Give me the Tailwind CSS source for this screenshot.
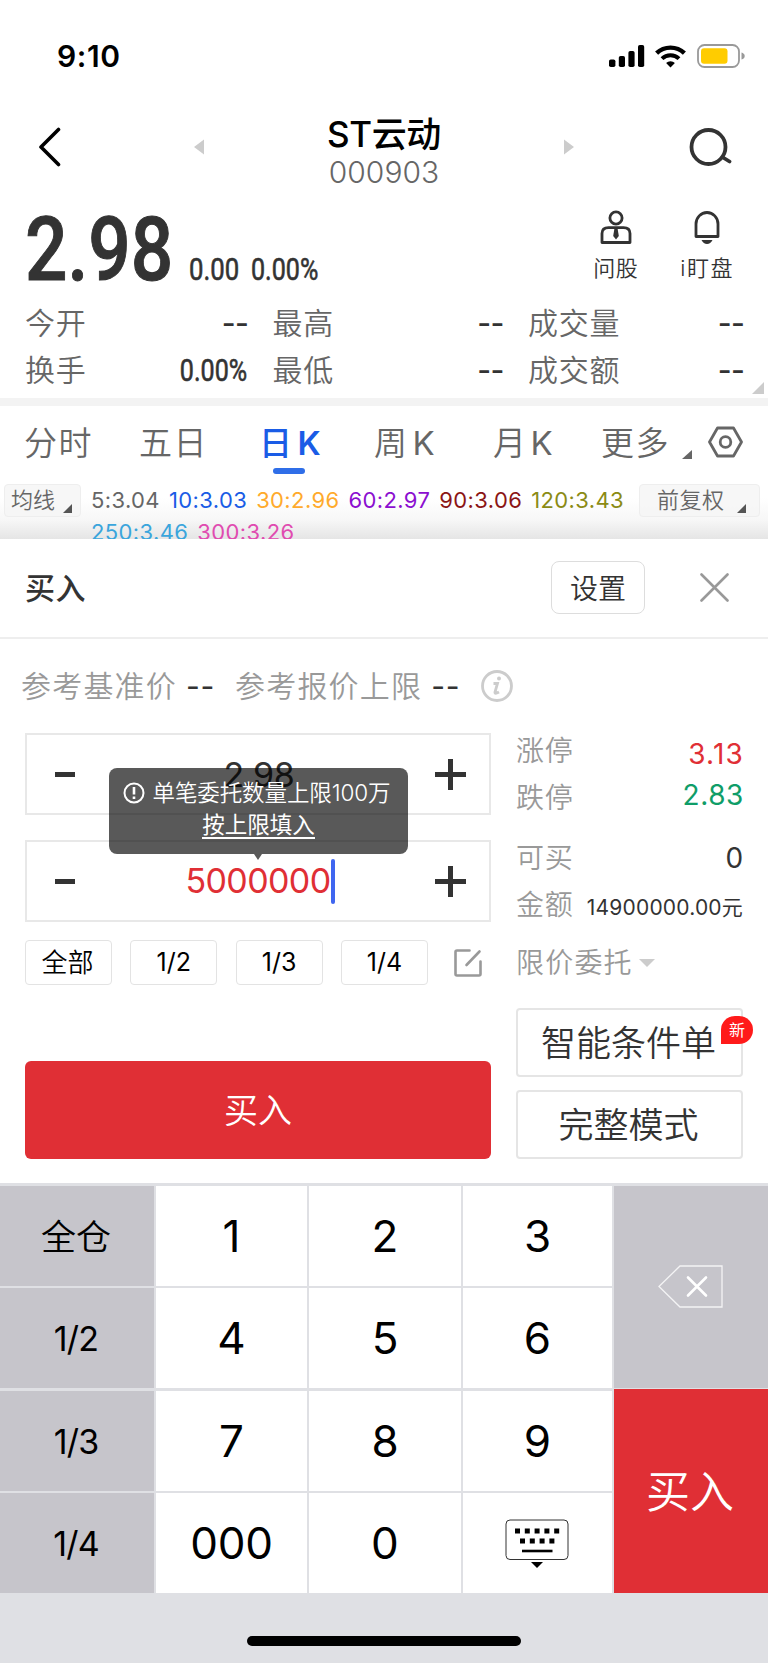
<!DOCTYPE html>
<html lang="zh-CN">

<head>
    <meta charset="UTF-8">
    <meta name="viewport" content="width=device-width, initial-scale=1.0">
    <script src="https://cdn.jsdelivr.net/npm/@tailwindcss/browser@4"></script>
    <title>ST云动 000903</title>
</head>

<body class="w-[768px] h-[1663px] overflow-hidden bg-white text-[#333] font-['Inter','Noto_Sans_CJK_SC',sans-serif] whitespace-nowrap leading-none">

    <!--Status bar-->
    <section class="flex justify-between items-center h-28 pl-[57px] pr-[23px] text-black">
        <p class="text-[30px] font-[560] tracking-[0.6px]">9:10</p>
        <div class="flex items-center">
            <svg class="w-9 h-[22px]" viewBox="0 0 36 22">
                <rect x="0" y="14.5" width="6.4" height="7.5" rx="1.8" />
                <rect x="9.8" y="11" width="6.2" height="11" rx="1.8" />
                <rect x="19.4" y="6" width="6.2" height="16" rx="1.8" />
                <rect x="29" y="0" width="6.2" height="22" rx="1.8" />
            </svg>
            <svg class="ml-[10px] w-[31px] h-[23px]" viewBox="0 0 31 23" fill="none" stroke="#000">
                <path d="M1.6 8.2a20 20 0 0 1 27.8 0" stroke-width="4.4" />
                <path d="M7 13.6a12.3 12.3 0 0 1 17 0" stroke-width="4" />
                <path d="M15.5 22.6l-4.4-4.5a6.3 6.3 0 0 1 8.8 0z" fill="#000" stroke="none" />
            </svg>
            <svg class="ml-[11px] w-12 h-6" viewBox="0 0 48 24">
                <rect x="1" y="1" width="41" height="22" rx="6.5" fill="none" stroke="#999" stroke-width="1.8" />
                <rect x="4" y="4.3" width="26.5" height="15.4" rx="3" fill="#fc0" />
                <path d="M44.5 8.5q3.2 1 3.2 3.5t-3.2 3.5z" fill="#999" />
            </svg>
        </div>
    </section>

    <!--Stock name-->
    <section class="flex items-center h-[70px] pl-[38px] pr-9">
        <svg class="w-[23px] h-10" viewBox="0 0 23 40" fill="none" stroke="#000" stroke-width="3.6" stroke-linecap="round" stroke-linejoin="round">
            <path d="M20.5 2.5L3 20l17.5 17.5" />
        </svg>
        <svg class="w-[10px] h-4 ml-[133px]" viewBox="0 0 10 16" fill="#ccc"><path d="M10 .5v15L0 8z" /></svg>
        <div class="flex flex-col items-center w-[360px] pt-3">
            <h1 class="text-[35px] leading-[38px] font-medium text-black tracking-[-0.4px]">ST云动</h1>
            <p class="text-[30px] leading-[38px] font-[350] text-[#666]">000903</p>
        </div>
        <svg class="w-[10px] h-4" viewBox="0 0 10 16" fill="#ccc"><path d="M0 .5v15L10 8z" /></svg>
        <svg class="ml-auto w-[43px] h-10" viewBox="0 0 43 40" fill="none" stroke="#333" stroke-width="3.8" stroke-linecap="round">
            <circle cx="19.5" cy="20" r="17" />
            <path d="M34 30.5l6.5 4" />
        </svg>
    </section>

    <!--Price-->
    <section class="flex justify-between h-[116px] pl-[25px] pr-[34px]">
        <div class="flex font-['Roboto',sans-serif]">
            <p class="w-[164px] pt-[23px] text-[89px] leading-[90px] font-medium [-webkit-text-stroke:1px] origin-left scale-x-[0.84]">2.98</p>
            <p class="w-[62px] pt-[72px] text-[31px] leading-[32px] [-webkit-text-stroke:0.6px] origin-left scale-x-[0.83]">0.00</p>
            <p class="pt-[72px] text-[31px] leading-[32px] [-webkit-text-stroke:0.6px] origin-left scale-x-[0.81]">0.00%</p>
        </div>
        <div class="flex gap-[42px] text-[22px] leading-7 pt-7 font-[350]">
            <div class="flex flex-col items-center">
                <svg class="w-8 h-[35px]" viewBox="0 0 32 35" fill="none" stroke="#333" stroke-width="2.8">
                    <circle cx="16" cy="8" r="6.1" />
                    <path d="M8.5 17.6h15q6.5 0 6.5 6v8.9h-28v-8.9q0-6 6.5-6z" stroke-linejoin="round" />
                    <path d="M14.5 18h3l1.3 8-2.8 3.5L13.2 26z" fill="#333" stroke="none" />
                </svg>
                <span class="mt-[9px] tracking-[0.5px]">问股</span>
            </div>
            <div class="flex flex-col items-center">
                <svg class="w-7 h-[35px]" viewBox="0 0 28 35" fill="none" stroke="#333" stroke-width="2.8">
                    <path d="M3 26.5V14a11 11.5 0 0 1 22 0v12.5z" stroke-linejoin="round" />
                    <path d="M8.5 30h11q-2 4-5.5 4t-5.5-4z" fill="#333" stroke="none" />
                </svg>
                <span class="mt-[9px] tracking-[1.5px]">i盯盘</span>
            </div>
        </div>
    </section>

    <!--Quote figures-->
    <section class="relative grid grid-cols-[222px_230px_214px] gap-x-[25.5px] content-start h-[100px] pl-[25px] pt-[2px] text-[30px] leading-[47px] text-[#666] font-[350] tracking-[0.7px]">
        <p class="flex justify-between">今开<b class="font-medium text-[#333] tracking-[-0.8px] -mr-[1px]">--</b></p>
        <p class="flex justify-between">最高<b class="font-medium text-[#333] tracking-[-0.8px] -mr-[1px]">--</b></p>
        <p class="flex justify-between">成交量<b class="font-medium text-[#333] tracking-[-0.8px] -mr-[2px]">--</b></p>
        <p class="flex justify-between">换手<b class="font-['Roboto'] font-normal text-[31px] text-[#333] tracking-normal [-webkit-text-stroke:0.6px] origin-right scale-x-[0.81]">0.00%</b></p>
        <p class="flex justify-between">最低<b class="font-medium text-[#333] tracking-[-0.8px] -mr-[1px]">--</b></p>
        <p class="flex justify-between">成交额<b class="font-medium text-[#333] tracking-[-0.8px] -mr-[2px]">--</b></p>
        <svg class="absolute right-1 bottom-1 w-3 h-3" viewBox="0 0 12 12" fill="#ccc"><path d="M12 0v12H0z" /></svg>
    </section>
    <div class="h-2 bg-[#f3f3f3]"></div>

    <!--Chart tabs-->
    <section class="grid grid-cols-[115px_122px_113px_119px_108px_107px_35px] h-[78px] pl-[24px] text-[33px] leading-[74px] text-[#666] font-[350] tracking-[1.5px]">
        <span>分时</span>
        <span>五日</span>
        <span class="relative -ml-[2px] font-medium text-[#1a5ce6]">日<i class="not-italic ml-[4px] font-semibold">K</i>
            <i class="absolute left-[14px] top-[62px] w-8 h-[6px] rounded-full bg-[#2f6ee8]"></i></span>
        <span>周<i class="not-italic ml-[4px] font-normal">K</i></span>
        <span>月<i class="not-italic ml-[3px] font-normal">K</i></span>
        <span class="flex items-start">更多<svg class="ml-3 mt-[44px] w-[10px] h-[9px]" viewBox="0 0 10 9" fill="#666"><path d="M10 0v9H0z" /></svg></span>
        <svg class="mt-5 w-[35px] h-8" viewBox="0 0 35 32" fill="none" stroke="#666" stroke-width="2.8">
            <path d="M9.5 2h16l8 14-8 14h-16l-8-14z" stroke-linejoin="round" />
            <circle cx="17.5" cy="16" r="5.3" />
        </svg>
    </section>

    <!--Moving averages-->
    <section class="flex h-[55px] px-1 overflow-hidden bg-linear-to-b from-white from-25% via-[#f7f7f7] via-65% to-[#e5e5e5] text-[22px] text-[#666]">
        <div class="flex w-[77px] h-[33px] pl-[6px] rounded border border-[#eee] bg-[#f5f5f5]/80 font-[350] leading-[30px]">均线
            <svg class="ml-2 mt-[19px] w-[9px] h-[9px]" viewBox="0 0 9 9" fill="#555"><path d="M9 0v9H0z" /></svg>
        </div>
        <div class="w-[548px] pl-[10px] leading-[32px] tracking-[0.38px]">
            <p class="flex gap-[9px] h-8">
                <span>5:3.04</span><span class="text-[#1a5ce6]">10:3.03</span><span class="text-[#ffaa2b]">30:2.96</span><span
                    class="text-[#8b0fd0]">60:2.97</span><span class="text-[#8b1515]">90:3.06</span><span
                    class="text-[#8b8b15]">120:3.43</span>
            </p>
            <p class="flex gap-[9px] leading-[33px]"><span class="text-[#3aa5dc]">250:3.46</span><span class="text-[#e04bb0]">300:3.26</span></p>
        </div>
        <div class="flex ml-[10px] w-[121px] h-[33px] pl-[17px] rounded border border-[#eee] bg-[#f5f5f5]/80 font-[350] leading-[30px] tracking-[0.5px]">前复权
            <svg class="ml-[12px] mt-[19px] w-[9px] h-[9px]" viewBox="0 0 9 9" fill="#555"><path d="M9 0v9H0z" /></svg>
        </div>
    </section>

    <!--Order panel header-->
    <section class="flex items-center h-[100px] pl-[25px] pr-[39px] pb-[1px] border-b-2 border-[#eee]">
        <h2 class="flex-1 pt-[1px] text-[30px] font-medium tracking-[0.5px]">买入</h2>
        <button class="w-[94px] h-[53px] pt-[2px] rounded-lg border border-[#ddd] text-[28px] font-[350]">设置</button>
        <svg class="ml-[55px] w-[29px] h-[29px]" viewBox="0 0 29 29" stroke="#999" stroke-width="2.6" stroke-linecap="round">
            <path d="M1.5 1.5l26 26M27.5 1.5l-26 26" />
        </svg>
    </section>

    <!--Reference prices-->
    <section class="flex items-center h-[94px] pl-[21px] text-[30px] tracking-[1.2px] text-[#999] font-[350]">
        参考基准价<b class="ml-[9px] w-[49px] font-normal text-[#333] tracking-[0.7px]">--</b>参考报价上限<b class="ml-[9px] w-[50px] font-normal text-[#333] tracking-[0.7px]">--</b>
        <svg class="w-8 h-8" viewBox="0 0 32 32" fill="none" stroke="#ccc" stroke-width="2.8">
            <circle cx="16" cy="16" r="14.5" />
            <path d="M12.5 13.5h4l-2.5 8.5q-.5 2.5 4 0" />
            <circle cx="18" cy="8.5" r="2" fill="#ccc" stroke="none" />
        </svg>
    </section>

    <!--Order form-->
    <section class="flex gap-[25px] h-[450px] pl-[25px] pr-[25px]">
        <div class="w-[466px]">
            <div class="flex items-center justify-between h-[82px] pl-[28px] pr-[23px] border-2 border-[#e8e8e8]">
                <i class="w-5 h-[5px] bg-[#333]"></i>
                <span class="ml-[8px] pt-[2px] text-[34px] font-[370] tracking-[-0.4px]">2.98</span>
                <svg class="w-[31px] h-[31px]" viewBox="0 0 31 31" stroke="#333" stroke-width="5"><path d="M0 15.5h31M15.5 0v31" /></svg>
            </div>
            <div class="relative flex items-center justify-between h-[82px] mt-[25px] pl-[28px] pr-[23px] border-2 border-[#e8e8e8]">
                <i class="w-5 h-[5px] bg-[#333]"></i>
                <span class="flex items-center ml-[10px] text-[34px] font-[370] text-[#e02f35] tracking-[-0.6px]">5000000<i class="w-1 h-[45px] rounded-full bg-[#3f66f0]"></i></span>
                <svg class="w-[31px] h-[31px]" viewBox="0 0 31 31" stroke="#333" stroke-width="5"><path d="M0 15.5h31M15.5 0v31" /></svg>

                <!--Quantity limit tooltip-->
                <div class="absolute left-[82px] top-[-74px] w-[299px] h-[86px] pt-2 rounded-lg bg-black/65 text-white text-[22.5px] text-center font-[350]">
                    <p class="flex items-center justify-center h-[33px] pt-[1px] pr-[4px] tracking-[-0.1px]">
                        <svg class="w-[22px] h-[22px] mr-2" viewBox="0 0 22 22" fill="none" stroke="#fff" stroke-width="2">
                            <circle cx="11" cy="11" r="9.5" />
                            <path d="M11 5v7.5M11 14.5v2.5" stroke-width="2.6" />
                        </svg>单笔委托数量上限100万
                    </p>
                    <p class="h-8 leading-8"><a class="inline-block h-[28px] leading-[28px] border-b-2 border-white font-normal">按上限填入</a></p>
                    <svg class="absolute left-[145px] top-[86px] w-2 h-[6px]" viewBox="0 0 8 6" fill="#595959"><path d="M0 0h8L4 6z" /></svg>
                </div>
            </div>

            <div class="flex items-center mt-[18px] gap-[18.3px] text-[25px] text-black">
                <button class="w-[87px] h-[45px] px-0 pt-[1px] pr-[2px] rounded border border-[#e3e3e3] text-[26px] font-[350]">全部</button>
                <button class="w-[87px] h-[45px] rounded border border-[#e3e3e3]">1/2</button>
                <button class="w-[87px] h-[45px] rounded border border-[#e3e3e3]">1/3</button>
                <button class="w-[87px] h-[45px] rounded border border-[#e3e3e3]">1/4</button>
                <svg class="ml-[8px] w-7 h-7" viewBox="0 0 28 28" fill="none" stroke="#999" stroke-width="2.6" stroke-linecap="round">
                    <path d="M15.5 1.5H3q-1.5 0-1.5 1.5v22q0 1.5 1.5 1.5h22q1.5 0 1.5-1.5V12.5M12.5 16L25.5 2.5" />
                </svg>
            </div>
            <button class="block mt-[76px] w-[466px] h-[98px] pt-[2px] rounded-md bg-[#e02f35] text-white text-[34px] font-[350]">买入</button>
        </div>

        <div class="w-[227px] text-[28px] text-[#999] font-[350]">
            <p class="flex justify-between items-center h-[47px] -mt-[6px] tracking-[0.8px]">涨停<span class="pt-[6px] -mr-[1px] font-normal text-[#e02f35] tracking-[1.2px]">3.13</span></p>
            <p class="flex justify-between items-center h-[47px] tracking-[0.8px]">跌停<span class="pb-[6px] -mr-[1px] font-normal text-[#0f9d68] tracking-[0.6px]">2.83</span></p>
            <p class="flex justify-between items-center h-[47px] mt-[13px] tracking-[0.8px]">可买<span class="-mr-[1px] font-normal text-[#333]">0</span></p>
            <p class="flex justify-between items-center h-[47px] tracking-[0.8px]">金额<span class="pt-[5px] font-normal text-[21px] text-[#333] tracking-[0.2px]">14900000.00元</span></p>
            <p class="flex items-center h-[47px] mt-[11px] tracking-[1.2px]">限价委托
                <svg class="ml-[6px] w-4 h-2" viewBox="0 0 16 8" fill="#ccc"><path d="M0 0h16L8 8z" /></svg>
            </p>
            <button class="relative block mt-[22px] w-[227px] h-[69px] rounded border-2 border-[#e5e5e5] text-[#333] text-[35px] pt-[2px] pr-[2px]">智能条件单
                <i class="absolute left-[203px] top-[6px] w-8 h-7 rounded-[14px] rounded-bl-none bg-[#ff1a1a] text-white text-[16px] leading-7 font-normal not-italic">新</i>
            </button>
            <button class="block mt-[13px] w-[227px] h-[69px] pt-[2px] pr-[2px] rounded border-2 border-[#e5e5e5] text-[#333] text-[35px]">完整模式</button>
        </div>
    </section>

    <!--Keypad-->
    <section class="grid grid-cols-[154px_151px_152px_149px_154px] grid-rows-[100px_100px_100px_100px] gap-x-[2px] gap-y-[2.3px] h-[480px] pt-[3px] bg-[#dfe0e4] text-black text-[44px] font-[380]">
        <button class="pt-[3px] pr-[2px] bg-[#c6c5cb] text-[35px] font-[350]">全仓</button>
        <button class="bg-white">1</button>
        <button class="bg-white">2</button>
        <button class="bg-white">3</button>
        <button class="row-span-2 flex items-center justify-center pr-[2px] pb-[2px] bg-[#c6c5cb]">
            <svg class="w-[65px] h-[43px]" viewBox="0 0 65 43" fill="none" stroke="#fff">
                <path d="M1 21.5L22 1h42v41H22z" stroke-width="1.3" opacity=".8" />
                <path d="M30 12.5l18 18M48 12.5l-18 18" stroke-width="2.6" stroke-linecap="round" />
            </svg>
        </button>
        <button class="pt-[2px] pr-[2px] bg-[#c6c5cb] text-[34px] tracking-[-0.8px]">1/2</button>
        <button class="bg-white">4</button>
        <button class="bg-white">5</button>
        <button class="bg-white">6</button>
        <button class="pt-[2px] pr-[2px] bg-[#c6c5cb] text-[34px] tracking-[-0.8px]">1/3</button>
        <button class="bg-white">7</button>
        <button class="bg-white">8</button>
        <button class="bg-white">9</button>
        <button class="row-span-2 -mt-[2px] pt-[2px] pr-[2px] bg-[#e02f35] text-white font-[350]">买入</button>
        <button class="pt-[2px] pr-[2px] bg-[#c6c5cb] text-[34px] tracking-[-0.8px]">1/4</button>
        <button class="bg-white tracking-[-0.3px]">000</button>
        <button class="bg-white">0</button>
        <button class="flex items-center justify-center pt-[2px] pr-[1px] bg-white">
            <svg class="w-16 h-[50px]" viewBox="0 0 64 50">
                <rect x="1" y="1" width="62" height="39.5" rx="4" fill="none" stroke="#333" />
                <path d="M10 12h45" stroke="#000" stroke-width="5" stroke-dasharray="5 4.8" />
                <path d="M15 22h35" stroke="#000" stroke-width="5" stroke-dasharray="5 4.8" />
                <path d="M17 32h30.5" stroke="#000" stroke-width="2.6" />
                <path d="M26 43h12l-6 6z" />
            </svg>
        </button>
        <!--Home indicator-->
        <i class="col-span-5 justify-self-center mt-[41px] w-[274px] h-[10px] rounded-full bg-black"></i>
    </section>

</body>

</html>
